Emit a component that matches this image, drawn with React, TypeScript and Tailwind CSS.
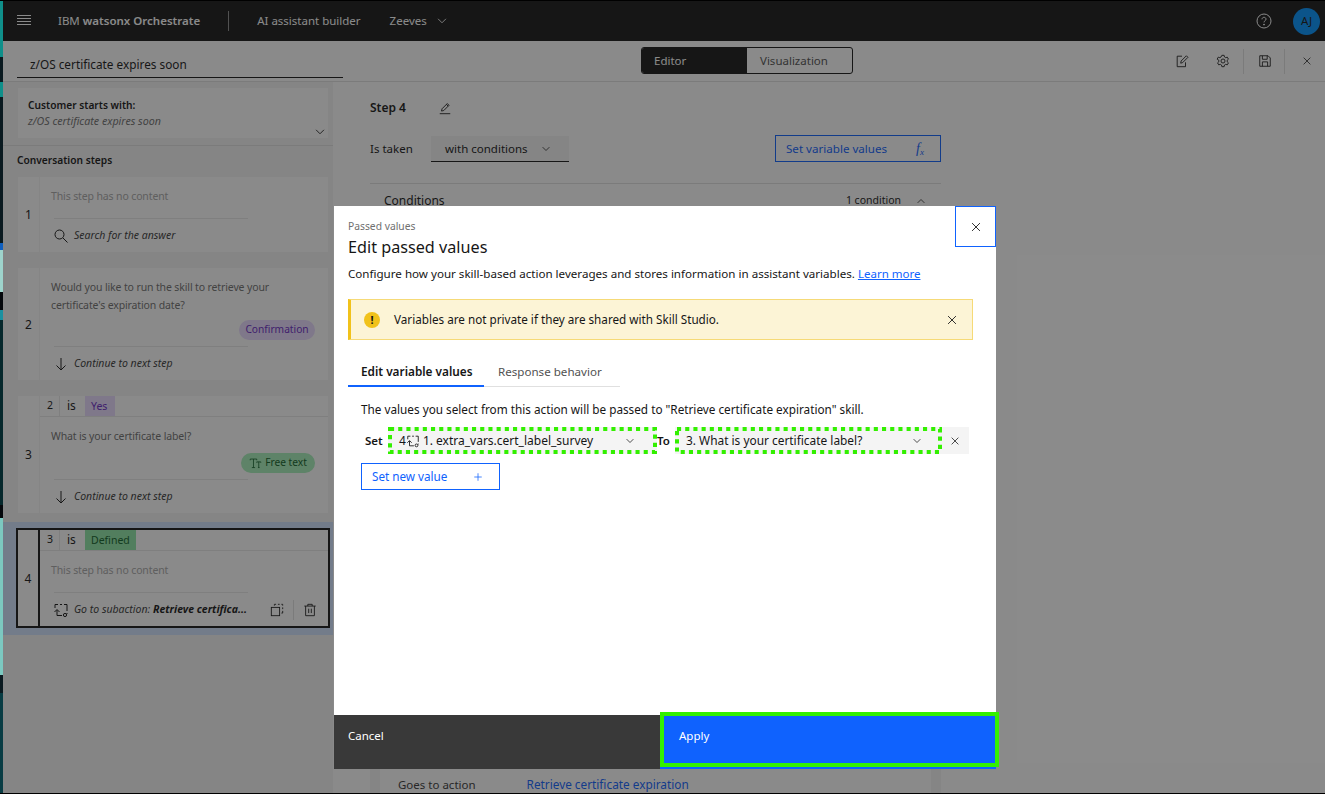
import React from "react";

type IP = { className?: string; size?: number };
const Svg = ({ size = 16, className, children }: IP & { children: React.ReactNode }) => (
  <svg width={size} height={size} viewBox="0 0 16 16" fill="none" stroke="currentColor" strokeWidth="1" className={className}>
    {children}
  </svg>
);
const Close = (p: IP) => <Svg {...p}><path d="M3.5 3.5l9 9M12.5 3.5l-9 9" /></Svg>;
const Chevron = (p: IP) => <Svg {...p}><path d="M3.5 5.5L8 10l4.5-4.5" /></Svg>;
const ChevronUp = (p: IP) => <Svg {...p}><path d="M3.5 10.5L8 6l4.5 4.5" /></Svg>;
const Pencil = (p: IP) => <Svg {...p}><path d="M2 14.5h12M4 11.5l.6-2.6 6-6 2 2-6 6-2.6.6zM9.6 3.9l2 2" /></Svg>;
const Search = (p: IP) => <Svg {...p}><circle cx="6.5" cy="6.5" r="4.5" /><path d="M10 10l4.5 4.5" /></Svg>;
const ArrowDown = (p: IP) => <Svg {...p}><path d="M8 2v12M3.5 9.5L8 14l4.5-4.5" /></Svg>;
const SubAction = (p: IP) => (
  <Svg {...p}>
    <path d="M2 6V2.500h3M7 2.500h2M11 2.500h3V9M14 11v1M9 13.500H4V8M1.500 10l2.500-2.500L6.500 10" />
    <circle cx="12" cy="13" r="1.600" />
  </Svg>
);
const Copy = (p: IP) => (
  <Svg {...p}>
    <rect x="1.500" y="5" width="9.500" height="9.500" />
    <path d="M5 3V1.500h2M9 1.500h2M13 1.500h1.500V3M14.500 5v2M14.500 9v2.500H13" />
  </Svg>
);
const Trash = (p: IP) => (
  <Svg {...p}>
    <path d="M1.500 3.500h13M5.500 3.500V1.500h5v2M3 3.500V14.500h10V3.500M6.500 6.500v5M9.500 6.500v5" />
  </Svg>
);
const Edit = (p: IP) => (
  <Svg {...p}>
    <path d="M12 9.500v5H2.500V2.500H8M6.500 10.500l.5-2.500L13 2l1.800 1.800-6 6z" />
  </Svg>
);
const Gear = (p: IP) => (
  <Svg {...p}>
    <circle cx="8" cy="8" r="2.300" />
    <path d="M6.700 1.500h2.600l.4 1.900 1.400.8 1.800-.6 1.300 2.300-1.400 1.200v1.800l1.400 1.200-1.300 2.300-1.800-.6-1.400.8-.4 1.900H6.700l-.4-1.900-1.400-.8-1.800.6-1.300-2.300 1.400-1.200V7.100L1.300 5.900l1.300-2.300 1.800.6 1.400-.8z" />
  </Svg>
);
const Save = (p: IP) => (
  <Svg {...p}>
    <path d="M2 2h9.500L14 4.500V14H2zM5 2v4h5.500V2M5 14V9h6v5" />
  </Svg>
);
const Help = (p: IP) => (
  <Svg {...p}>
    <circle cx="8" cy="8" r="7" />
    <path d="M6 6.300C6 5 7 4.300 8 4.300s2 .7 2 1.900c0 1.500-2 1.500-2 3.200" />
    <circle cx="8" cy="11.600" r=".5" fill="currentColor" />
  </Svg>
);
const Plus = (p: IP) => <Svg {...p}><path d="M8 3v10M3 8h10" /></Svg>;
const TextIcon = (p: IP) => (
  <Svg {...p}>
    <path d="M1.500 4V2.500h8V4M5.500 2.500V13M3.500 13h4M9.500 7V6h5v1M12 6v7M11 13h2" />
  </Svg>
);

const DottedBox = ({ className }: { className: string }) => (
  <svg className={className} width="100%" height="100%">
    <rect x="2" y="2" width="calc(100% - 4px)" height="calc(100% - 4px)" fill="none" stroke="#33f000" strokeWidth="4" strokeDasharray="4.100 4.100" />
  </svg>
);

const Cond = ({ n, value, tag }: { n: string; value: string; tag: string }) => (
  <div className="h-[21px] flex items-stretch border-b border-[#e8e8e8] text-[10.500px] shrink-0">
    <div className="w-[20px] pl-[7px] flex items-center border-r border-[#e8e8e8] text-[#161616]">{n}</div>
    <div className="w-[25px] pl-[7px] flex items-center text-[#161616] text-[12px]">is</div>
    <div className={`pl-[6px] pt-[1px] flex items-center ${tag}`}>{value}</div>
  </div>
);

const StepCard = ({
  n, h, selected, cond, body, bodyTone, pill, footIcon, footer, actions, footPad,
}: {
  n: string; h: string; selected?: boolean; cond?: React.ReactNode; body: React.ReactNode; bodyTone: string; pill?: React.ReactNode;
  footIcon: React.ReactNode; footer: React.ReactNode; actions?: React.ReactNode; footPad?: boolean;
}) => (
  <div className={`flex ${h} ${selected ? "border-2 border-[#161616] ml-[13px] mr-[3px] w-[314px]" : "ml-[15px] w-[310px]"}`}>
    <div className={`w-[21px] pt-[1px] shrink-0 flex items-center justify-center text-[12px] text-[#161616] bg-white ${selected ? "border-r-2 border-[#161616] w-[22px] bg-[#f8f8f8]" : ""}`}>{n}</div>
    <div className={`flex-1 flex flex-col bg-white ${selected ? "bg-[#f8f8f8]" : "ml-[1px]"}`}>
      {cond}
      <div className="flex-1 flex flex-col pl-[11px] pt-[10px] pr-[13px] relative">
        <div className={`text-[10.500px] leading-[18px] tracking-[-0.13px] ${bodyTone}`}>{body}</div>
        {pill && <div className="flex justify-end mt-auto mb-[6px]">{pill}</div>}
      </div>
      <div className="ml-[14px] w-[194px] border-t border-[#e8e8e8]" />
      <div className={`h-[33px] flex items-center pl-[13px] text-[10.500px] italic text-[#393939] shrink-0 ${footPad ? "pt-[1px]" : ""}`}>
        <span className="mr-[5px] text-[#161616]">{footIcon}</span>
        <span className="whitespace-nowrap">{footer}</span>
        {actions}
      </div>
    </div>
  </div>
);

export default function App() {
  return (
    <div className="relative w-[1325px] h-[794px] overflow-hidden bg-white flex font-['Noto_Sans',sans-serif] text-[#161616]">
      <div className="flex-1 flex flex-col min-w-0 pl-[3px] pt-[1px] pb-[1px]">
        {/* Top bar */}
        <header className="h-[40px] shrink-0 bg-[#161616] flex items-center text-white text-[11.500px]">
          <svg width="16" height="16" viewBox="0 0 16 16" stroke="currentColor" className="ml-[13px]">
            <path d="M1 2.500h14M1 5.500h14M1 8.500h14M1 11.500h14" />
          </svg>
          <span className="ml-[26px] whitespace-nowrap">IBM <b className="font-semibold">watsonx Orchestrate</b></span>
          <span className="ml-[28px] w-px h-[20px] bg-[#8d8d8d]" />
          <span className="ml-[28px] whitespace-nowrap">AI assistant builder</span>
          <span className="ml-[29px]">Zeeves</span>
          <Chevron size={14} className="ml-[8px]" />
          <Help size={16} className="ml-auto" />
          <span className="ml-[21px] mr-[5px] w-[27px] h-[27px] rounded-full bg-[#0092ff] text-[#161616] text-[11.500px] flex items-center justify-center">AJ</span>
        </header>

        {/* Toolbar */}
        <div className="h-[41px] shrink-0 flex items-start border-b border-[#e0e0e0] relative">
          <div className="ml-[14px] w-[326px] h-[37px] pt-[12px] border-b border-[#161616] flex items-center pl-[13px] text-[11.800px] text-[#161616]">z/OS certificate expires soon</div>
          <div className="ml-[298px] mt-[6px] w-[212px] h-[27px] rounded-[3px] border border-[#161616] flex text-[11.500px] overflow-hidden">
            <div className="w-[105px] bg-[#161616] text-white pl-[12px] flex items-center">Editor</div>
            <div className="flex-1 pl-[13px] flex items-center text-[#525252]">Visualization</div>
          </div>
          <div className="ml-auto h-[40px] flex items-center text-[#161616]">
            <Edit size={14} />
            <Gear size={14} className="ml-[27px]" />
            <span className="ml-[13px] w-px h-[25px] bg-[#e0e0e0]" />
            <Save size={14} className="ml-[14px]" />
            <span className="ml-[12px] w-px h-[25px] bg-[#e0e0e0]" />
            <Close size={12} className="ml-[16px] mr-[12px]" />
          </div>
        </div>

        {/* Body */}
        <div className="flex-1 flex min-h-0">
          {/* Left */}
          <aside className="w-[340px] shrink-0 bg-[#f4f4f4] flex">
            <div className="w-[330px] flex flex-col">
              <div className="h-[64px] shrink-0 border-b border-[#e0e0e0] w-[340px] pt-[6px]">
                <div className="ml-[15px] w-[310px] h-[50px] bg-white relative pl-[10px] pt-[10px]">
                  <div className="text-[10.200px] font-semibold leading-[14px]">Customer starts with:</div>
                  <div className="text-[10.700px] italic text-[#6f6f6f] leading-[18px]">z/OS certificate expires soon</div>
                  <Chevron size={14} className="absolute right-[1px] bottom-[-1px]" />
                </div>
              </div>
              <div className="ml-[14px] mt-[7px] mb-[10px] text-[10.200px] font-semibold leading-[14px]">Conversation steps</div>
              <div className="flex flex-col">
                <StepCard n="1" h="h-[75px]" footPad bodyTone="text-[#a8a8a8]" body="This step has no content" footIcon={<Search />} footer="Search for the answer" />
                <div className="h-[16px]" />
                <StepCard
                  n="2" h="h-[112px]" footPad bodyTone="text-[#6f6f6f]"
                  body="Would you like to run the skill to retrieve your certificate's expiration date?"
                  pill={<span className="h-[20px] w-[76px] rounded-full bg-[#e8daff] text-[#6929c4] text-[10.200px] flex items-center justify-center">Confirmation</span>}
                  footIcon={<ArrowDown />} footer="Continue to next step"
                />
                <div className="h-[16px]" />
                <StepCard
                  n="3" h="h-[117px]" bodyTone="text-[#6f6f6f]"
                  cond={<Cond n="2" value="Yes" tag="w-[30px] bg-[#e8daff] text-[#6929c4]" />}
                  body="What is your certificate label?"
                  pill={<span className="h-[20px] w-[74px] rounded-full bg-[#a7f0ba] text-[#0e6027] text-[10.200px] flex items-center justify-center gap-[3px]"><TextIcon size={13} />Free text</span>}
                  footIcon={<ArrowDown />} footer="Continue to next step"
                />
                <div className="h-[9px]" />
                <div className="h-[113px] bg-[#d0e2ff] pt-[6px]">
                  <StepCard
                    n="4" h="h-[100px]" selected bodyTone="text-[#a8a8a8]"
                    cond={<Cond n="3" value="Defined" tag="w-[51px] bg-[#8ee6a6] text-[#0e6027]" />}
                    body="This step has no content"
                    footIcon={<SubAction />}
                    footer={<>Go to subaction: <b className="font-bold text-[#161616]">Retrieve certifica...</b></>}
                    actions={
                      <span className="ml-auto flex items-center not-italic text-[#161616]">
                        <Copy size={14} className="mr-[9px]" />
                        <span className="w-px h-[20px] bg-[#e0e0e0] mr-[9px]" />
                        <Trash size={14} className="mr-[11px]" />
                      </span>
                    }
                  />
                </div>
              </div>
            </div>
            <div className="flex-1 bg-white" />
          </aside>

          {/* Right */}
          <main className="flex-1 pl-[27px] flex flex-col min-w-0">
            <div className="w-[571px] flex-1 flex flex-col">
              <div className="mt-[16px] h-[20px] flex items-center text-[12px] font-semibold">
                Step 4
                <Pencil size={14} className="ml-[32px] font-normal" />
              </div>
              <div className="mt-[17px] flex items-center justify-between">
                <div className="flex items-center text-[11.500px]">
                  <span className="w-[61px]">Is taken</span>
                  <div className="w-[138px] h-[26px] pt-[1px] bg-[#f4f4f4] border-b border-[#161616] pl-[14px] pr-[17px] flex items-center justify-between">
                    with conditions <Chevron size={12} />
                  </div>
                </div>
                <div className="w-[166px] h-[27px] border border-[#0f62fe] text-[#0f62fe] flex items-center justify-between pl-[10px] pr-[16px] text-[11.600px]">
                  Set variable values <i className="font-['Liberation_Serif',serif] text-[14px]">f<sub className="text-[9px]">x</sub></i>
                </div>
              </div>
              <div className="mt-[21px] border-t border-[#e0e0e0] h-[34px] flex items-center justify-between pl-[14px] pr-[14px] text-[12px]">
                Conditions
                <span className="flex items-center text-[10.500px] gap-[14px]">1 condition <ChevronUp size={12} /></span>
              </div>
              <div className="mt-auto h-[24px] bg-[#f4f4f4] px-[10px]">
                <div className="h-full bg-white pl-[18px] pt-[8px] flex items-center gap-[51px] text-[11.500px] text-[#393939]">
                  Goes to action
                  <span className="text-[#0f62fe] text-[11.800px]">Retrieve certificate expiration</span>
                </div>
              </div>
            </div>
          </main>
        </div>
      </div>

      {/* Overlay */}
      <div className="absolute inset-0 bg-[#161616]/50" />

      {/* Capture artefacts */}
      <div className="absolute left-0 top-[1px] bottom-0 w-[3px] flex flex-col bg-[#0a0f12]">
        <div className="h-[56px] bg-[#0f8f8a]" />
        <div className="h-[25px] bg-[#0a1a20]" />
        <div className="h-[15px] bg-[#0f8f8a]" />
        <div className="h-[146px] bg-[#0a1a20]" />
        <div className="h-[7px] bg-[#1060c0]" />
        <div className="h-[42px] bg-[#9ed4cc]" />
        <div className="h-[18px] bg-[#05080c]" />
        <div className="h-[10px] bg-[#1a90a0]" />
        <div className="h-[185px] bg-[#06282c]" />
        <div className="h-[13px] bg-[#05080c]" />
        <div className="h-[157px] bg-[#7cc8c0]" />
        <div className="h-[18px] bg-[#0a1a20]" />
        <div className="flex-1 bg-[#083c44]" />
      </div>
      <div className="absolute left-0 right-0 top-0 h-px bg-black" />
      <div className="absolute left-0 right-0 bottom-0 h-px bg-black" />

      {/* Modal */}
      <section className="absolute left-[334px] top-[206px] w-[662px] h-[563px] bg-white flex flex-col">
        <div className="absolute right-0 top-0 w-[41px] h-[41px] border border-[#0f62fe] flex items-center justify-center">
          <Close size={14} />
        </div>
        <div className="flex-1 pl-[14px] pt-[14px] flex flex-col min-h-0">
          <div className="text-[10.300px] leading-[13px] text-[#6f6f6f]">Passed values</div>
          <h2 className="mt-[3px] text-[16.200px] leading-[22px] font-normal">Edit passed values</h2>
          <p className="mt-[8px] text-[11.600px] leading-[16px] whitespace-nowrap">
            Configure how your skill-based action leverages and stores information in assistant variables.{" "}
            <span className="text-[#0f62fe] underline text-[11.500px]">Learn more</span>
          </p>
          <div className="mt-[17px] w-[625px] h-[41px] bg-[#fcf4d6] border border-[#f1c21b]/50 border-l-[3px] border-l-[#f1c21b] flex items-center pl-[13px] pr-[13px] text-[11.700px]">
            <span className="w-[16px] h-[16px] rounded-full bg-[#f1c21b] flex items-center justify-center text-[11px] font-bold leading-none">!</span>
            <span className="ml-[14px]">Variables are not private if they are shared with Skill Studio.</span>
            <Close size={14} className="ml-auto" />
          </div>
          <div className="mt-[21px] flex h-[26px] text-[11.600px]">
            <div className="w-[136px] pl-[13px] pb-[2px] border-b-2 border-[#0f62fe] font-semibold text-[11.800px] flex items-center">Edit variable values</div>
            <div className="w-[136px] pl-[14px] pb-[4px] border-b border-[#e0e0e0] text-[#525252] flex items-center">Response behavior</div>
          </div>
          <div className="mt-[14px] ml-[13px] text-[11.750px] leading-[16px] whitespace-nowrap">
            The values you select from this action will be passed to "Retrieve certificate expiration" skill.
          </div>
          <div className="mt-[10px] ml-[4px] h-[27px] flex items-center text-[11.900px]">
            <span className="w-[36px] pl-[13px] font-semibold text-[11.500px]">Set</span>
            <div className="relative w-[269px] h-[27px] bg-[#f4f4f4] flex items-center pl-[11px] pr-[21px]">
              <span className="whitespace-nowrap flex items-center text-[12px]">4<SubAction size={14} className="mr-[3px]" />1. extra_vars.cert_label_survey</span>
              <Chevron size={12} className="ml-auto" />
              <DottedBox className="absolute inset-0" />
            </div>
            <span className="w-[18px] font-semibold text-[11.500px]">To</span>
            <div className="flex h-[27px] bg-[#f4f4f4] w-[294px]">
              <div className="relative w-[267px] flex items-center pl-[11px] pr-[19px]">
                <span className="whitespace-nowrap">3. What is your certificate label?</span>
                <Chevron size={12} className="ml-auto" />
                <DottedBox className="absolute inset-0" />
              </div>
              <div className="flex-1 flex items-center justify-center pr-[2px]"><Close size={12} /></div>
            </div>
          </div>
          <div className="mt-[9px] ml-[13px] w-[139px] h-[27px] border border-[#0f62fe] text-[#0f62fe] text-[11.700px] flex items-center justify-between pl-[10px] pr-[15px]">
            Set new value <Plus size={12} />
          </div>
        </div>
        <footer className="h-[54px] flex shrink-0 text-white text-[11.500px]">
          <div className="w-[326px] bg-[#393939] pl-[14px] pt-[12px]">Cancel</div>
          <div className="relative flex-1 bg-[#0f62fe] pl-[19px] pt-[12px]">
            Apply
            <div className="absolute left-0 -right-[3px] -top-[3px] h-[55px] border-[4px] border-[#33f000]" />
          </div>
        </footer>
      </section>
    </div>
  );
}
